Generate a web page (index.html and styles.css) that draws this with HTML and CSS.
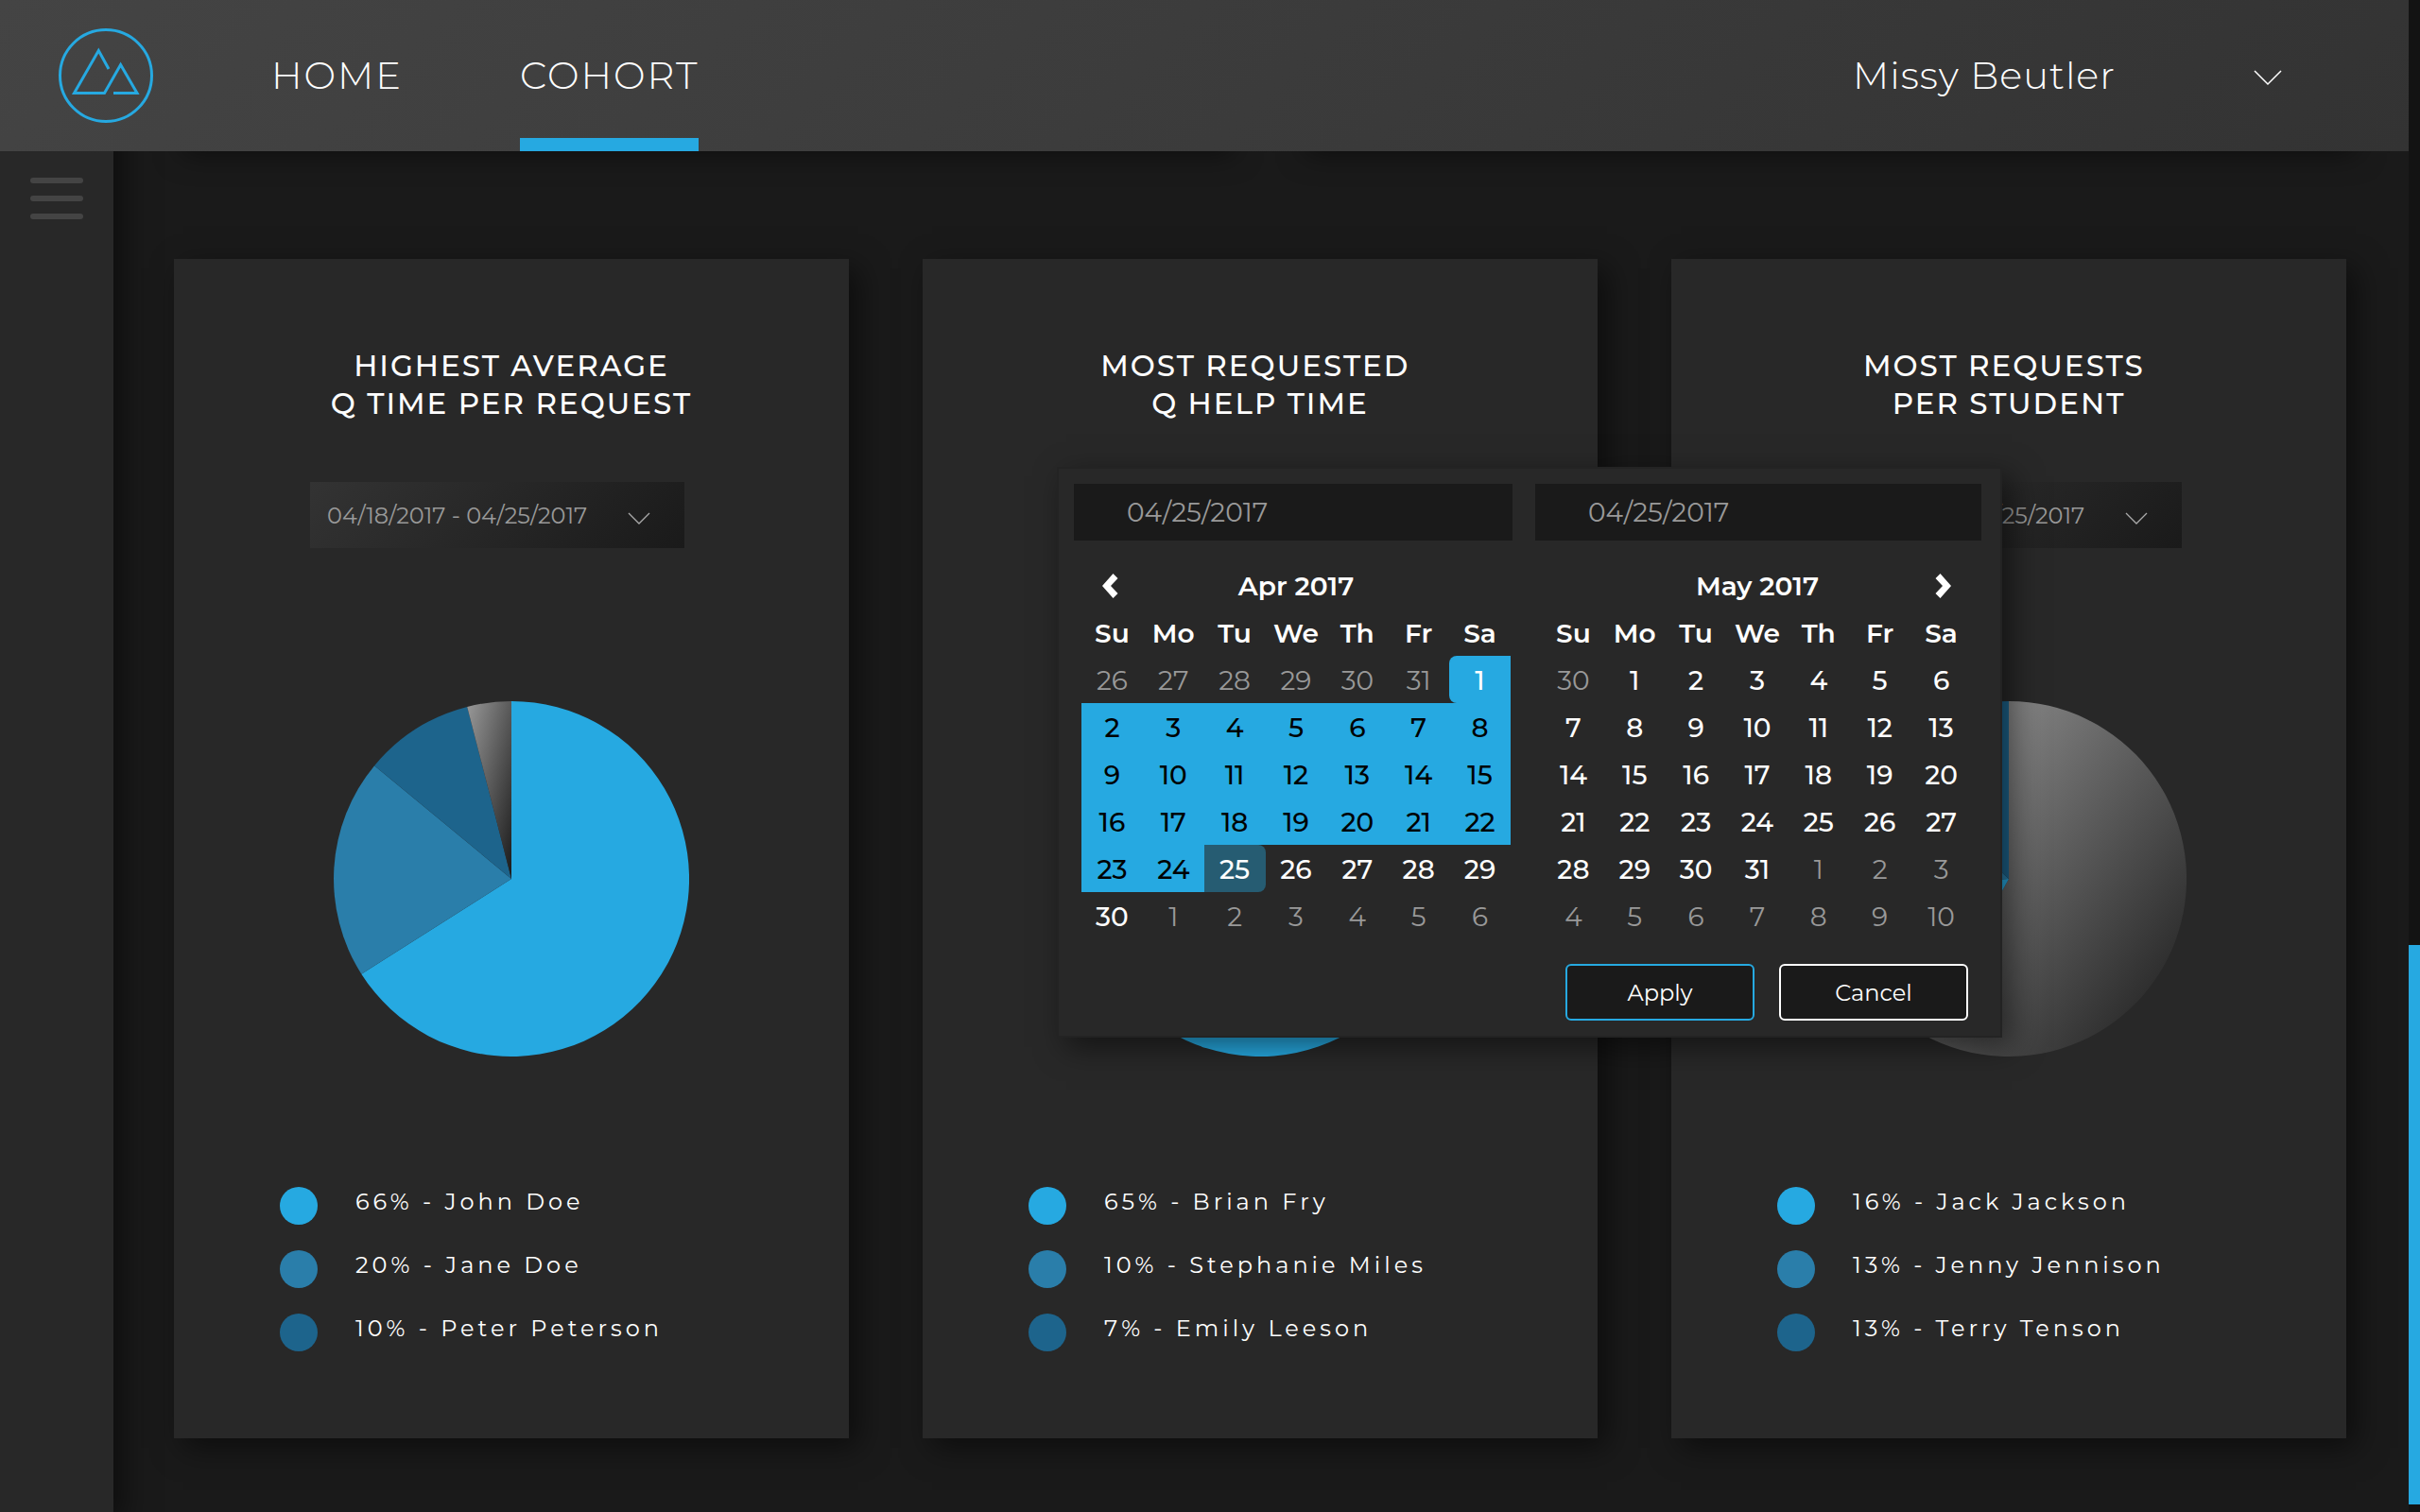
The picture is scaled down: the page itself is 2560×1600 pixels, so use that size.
FILE: index.html
```html
<!DOCTYPE html>
<html lang="en">
<head>
<meta charset="utf-8">
<meta name="viewport" content="width=device-width, initial-scale=1">
<title>Cohort</title>
<link rel="stylesheet" href="styles.css">
</head>
<body>
<header class="topbar">
  <a class="logo" href="#" aria-label="Start page">
    <svg viewBox="0 0 100 100" fill="none" stroke="#26a9e1" stroke-width="3">
      <circle cx="50" cy="50" r="48.5"/>
      <path d="M53 43 42.300 23.500 16.500 68.500H48.500L65.600 38.500 83 68.500H58"/>
    </svg>
  </a>
  <nav class="nav">
    <a class="nav-link" href="#">HOME</a>
    <a class="nav-link active" href="#" aria-current="page">COHORT</a>
  </nav>
  <button class="user" type="button">Missy Beutler
    <svg class="user-chevron" viewBox="0 0 30 17" fill="none" stroke="#fff" stroke-width="1.500"><path d="M1 1 15 15 29 1"/></svg>
  </button>
</header>

<div class="layout">
  <aside class="sidebar">
    <button class="menu" type="button" aria-label="Menu"><span></span><span></span><span></span></button>
  </aside>
  <main class="content">
    <div class="row row-top"><div class="card"></div><div class="card"></div></div>
    <div class="row">
      <section class="card stat">
        <h2 class="title">HIGHEST AVERAGE<br>Q TIME PER REQUEST</h2>
        <button class="range" type="button">04/18/2017 - 04/25/2017
          <svg viewBox="0 0 24 14" fill="none" stroke="#aaa" stroke-width="1.300"><path d="M1 1 12 12 23 1"/></svg>
        </button>
        <svg class="pie" viewBox="-188 -188 376 376" role="img" aria-label="Share of requests">
          <defs>
            <linearGradient id="rest" x1="0" y1="0" x2="1" y2="1"><stop offset="0" stop-color="#999"/><stop offset="1" stop-color="#1a1a1a"/></linearGradient>
          </defs>
          <path fill="#26a9e1" d="M0 0V-188A188 188 0 1 1 -158.700 100.700Z"/>
          <path fill="#2a7eaa" d="M0 0-158.700 100.700A188 188 0 0 1 -144.900 -119.800Z"/>
          <path fill="#1d648c" d="M0 0-144.900 -119.800A188 188 0 0 1 -46.800 -182.100Z"/>
          <path fill="url(#rest)" d="M0 0-46.800 -182.100A188 188 0 0 1 0 -188Z"/>
        </svg>
        <ul class="legend">
          <li><i class="dot dot-1"></i>66% - John Doe</li>
          <li><i class="dot dot-2"></i>20% - Jane Doe</li>
          <li><i class="dot dot-3"></i>10% - Peter Peterson</li>
        </ul>
      </section>

      <section class="card stat">
        <h2 class="title">MOST REQUESTED&nbsp;<br>Q HELP TIME</h2>
        <button class="range" type="button">04/18/2017 - 04/25/2017
          <svg viewBox="0 0 24 14" fill="none" stroke="#aaa" stroke-width="1.300"><path d="M1 1 12 12 23 1"/></svg>
        </button>
        <svg class="pie" viewBox="-188 -188 376 376" role="img" aria-label="Share of help time">
          <path fill="url(#rest)" d="M0 0-182.100 -46.800A188 188 0 0 1 0 -188Z"/>
          <path fill="#26a9e1" d="M0 0V-188A188 188 0 1 1 -152.100 110.500Z"/>
          <path fill="#2a7eaa" d="M0 0-152.100 110.500A188 188 0 0 1 -188 0Z"/>
          <path fill="#1d648c" d="M0 0-188 0A188 188 0 0 1 -182.100 -46.800Z"/>
        </svg>
        <ul class="legend">
          <li><i class="dot dot-1"></i>65% - Brian Fry</li>
          <li><i class="dot dot-2"></i>10% - Stephanie Miles</li>
          <li><i class="dot dot-3"></i>7% - Emily Leeson</li>
        </ul>
        <div class="picker" role="dialog" aria-label="Choose a date range">
          <div class="month">
            <input class="date" type="text" aria-label="Start date" value="04/25/2017">
            <table class="days">
              <thead>
                <tr><th><button class="step" type="button" aria-label="Previous month"><svg viewBox="0 0 18 26"><path fill="#fff" d="M10.500 0 15.500 5 8 13 15.500 21 10.500 26 -1 13Z"/></svg></button></th><th colspan="5">Apr 2017</th><th></th></tr>
                <tr><th>Su</th><th>Mo</th><th>Tu</th><th>We</th><th>Th</th><th>Fr</th><th>Sa</th></tr>
              </thead>
              <tbody>
                <tr><td class="off">26</td><td class="off">27</td><td class="off">28</td><td class="off">29</td><td class="off">30</td><td class="off">31</td><td class="in start">1</td></tr>
                <tr class="full"><td>2</td><td>3</td><td>4</td><td>5</td><td>6</td><td>7</td><td>8</td></tr>
                <tr class="full"><td>9</td><td>10</td><td>11</td><td>12</td><td>13</td><td>14</td><td>15</td></tr>
                <tr class="full"><td>16</td><td>17</td><td>18</td><td>19</td><td>20</td><td>21</td><td>22</td></tr>
                <tr><td class="in">23</td><td class="in">24</td><td class="end">25</td><td>26</td><td>27</td><td>28</td><td>29</td></tr>
                <tr><td>30</td><td class="off">1</td><td class="off">2</td><td class="off">3</td><td class="off">4</td><td class="off">5</td><td class="off">6</td></tr>
              </tbody>
            </table>
          </div>
          <div class="month">
            <input class="date" type="text" aria-label="End date" value="04/25/2017">
            <table class="days">
              <thead>
                <tr><th></th><th colspan="5">May 2017</th><th><button class="step" type="button" aria-label="Next month"><svg viewBox="0 0 18 26"><path fill="#fff" d="M7.500 0 2.500 5 10 13 2.500 21 7.500 26 19 13Z"/></svg></button></th></tr>
                <tr><th>Su</th><th>Mo</th><th>Tu</th><th>We</th><th>Th</th><th>Fr</th><th>Sa</th></tr>
              </thead>
              <tbody>
                <tr><td class="off">30</td><td>1</td><td>2</td><td>3</td><td>4</td><td>5</td><td>6</td></tr>
                <tr><td>7</td><td>8</td><td>9</td><td>10</td><td>11</td><td>12</td><td>13</td></tr>
                <tr><td>14</td><td>15</td><td>16</td><td>17</td><td>18</td><td>19</td><td>20</td></tr>
                <tr><td>21</td><td>22</td><td>23</td><td>24</td><td>25</td><td>26</td><td>27</td></tr>
                <tr><td>28</td><td>29</td><td>30</td><td>31</td><td class="off">1</td><td class="off">2</td><td class="off">3</td></tr>
                <tr><td class="off">4</td><td class="off">5</td><td class="off">6</td><td class="off">7</td><td class="off">8</td><td class="off">9</td><td class="off">10</td></tr>
              </tbody>
            </table>
          </div>
          <div class="actions">
            <button class="btn btn-apply" type="button">Apply</button>
            <button class="btn" type="button">Cancel</button>
          </div>
        </div>
      </section>

      <section class="card stat">
        <h2 class="title">MOST REQUESTS&nbsp;<br>PER STUDENT</h2>
        <button class="range" type="button">04/18/2017 - 04/25/2017
          <svg viewBox="0 0 24 14" fill="none" stroke="#aaa" stroke-width="1.300"><path d="M1 1 12 12 23 1"/></svg>
        </button>
        <svg class="pie" viewBox="-188 -188 376 376" role="img" aria-label="Share of requests per student">
          <path fill="url(#rest)" d="M0 0V-188A188 188 0 1 1 -90.600 164.700Z"/>
          <path fill="#26a9e1" d="M0 0-90.600 164.700A188 188 0 0 1 -187.600 11.800Z"/>
          <path fill="#2a7eaa" d="M0 0-187.600 11.800A188 188 0 0 1 -137 -128.700Z"/>
          <path fill="#1d648c" d="M0 0-137 -128.700A188 188 0 0 1 0 -188Z"/>
        </svg>
        <ul class="legend">
          <li><i class="dot dot-1"></i>16% - Jack Jackson</li>
          <li><i class="dot dot-2"></i>13% - Jenny Jennison</li>
          <li><i class="dot dot-3"></i>13% - Terry Tenson</li>
        </ul>
      </section>
    </div>
  </main>
</div>
<div class="scrollbar"><div class="thumb"></div></div>
</body>
</html>
```
FILE: styles.css
```css
*,
*::before,
*::after {
  box-sizing: border-box;
}

body {
  margin: 0;
  padding-right: 12px;
  background: #1a1a1a;
  color: #fff;
  font-family: Montserrat, Inter, sans-serif;
  font-size: 24px;
}

button,
input {
  font: inherit;
  color: inherit;
  border: 0;
  margin: 0;
  padding: 0;
  background: none;
}

/* Top bar */
.topbar {
  position: fixed;
  z-index: 3;
  top: 0;
  left: 0;
  right: 12px;
  height: 160px;
  padding: 0 134px 0 62px;
  display: flex;
  align-items: center;
  background: linear-gradient(135deg, #444, #333);
  font-size: 40px;
  font-weight: 300;
  letter-spacing: 2px;
}

.logo svg {
  display: block;
  width: 100px;
  height: 100px;
}

.nav {
  align-self: stretch;
  display: flex;
  gap: 124px;
  margin-left: 125px;
}

.nav-link {
  display: flex;
  align-items: center;
  color: #fff;
  text-decoration: none;
  border-bottom: 14px solid transparent;
  padding-top: 12px;
}

.nav-link.active {
  border-bottom-color: #26a9e1;
}

.user {
  display: flex;
  align-items: center;
  gap: 146px;
  margin-left: auto;
  padding-bottom: 2px;
  letter-spacing: 1px;
}

.user-chevron {
  width: 30px;
  height: 17px;
  margin-top: 6px;
}

/* Page frame */
.layout {
  display: grid;
  grid-template-columns: 120px 1fr;
  min-height: 100vh;
}

.sidebar {
  padding: 188px 32px 0;
  background: #282828;
  box-shadow: 10px 10px 30px rgba(0, 0, 0, .5);
}

.menu {
  width: 100%;
  display: grid;
  gap: 13px;
}

.menu span {
  height: 6px;
  border-radius: 3px;
  background: #444;
}

.content {
  padding: 72px 66px 78px 64px;
}

.row {
  display: grid;
  grid-auto-flow: column;
  grid-auto-columns: 1fr;
  gap: 78px;
}

.row-top {
  grid-auto-rows: 80px;
  margin-bottom: 122px;
}

.card {
  background: #282828;
  box-shadow: 10px 10px 30px rgba(0, 0, 0, .5);
}

/* Statistic cards */
.stat {
  position: relative;
  display: flex;
  flex-direction: column;
  align-items: center;
  padding: 93px 0 92px;
}

.title {
  margin: 0 0 63px;
  font-size: 31px;
  line-height: 40px;
  font-weight: 500;
  letter-spacing: 2px;
  text-align: center;
}

.range {
  align-self: flex-start;
  width: 396px;
  height: 70px;
  margin-left: 144px;
  padding: 0 36px 0 18px;
  display: flex;
  align-items: center;
  justify-content: space-between;
  background: linear-gradient(135deg, #333, #1a1a1a);
  color: #999;
}

.range svg {
  width: 24px;
  height: 14px;
  margin-top: 8px;
}

.pie {
  width: 376px;
  height: 376px;
  margin-top: 162px;
}

.legend {
  align-self: stretch;
  display: grid;
  gap: 27px;
  margin: 138px 0 0;
  padding: 0 0 0 112px;
  list-style: none;
  letter-spacing: 4px;
}

.legend li {
  display: flex;
  gap: 40px;
  line-height: 32px;
}

.dot {
  width: 40px;
  height: 40px;
  border-radius: 50%;
}

.dot-1 {
  background: #26a9e1;
}

.dot-2 {
  background: #2a7eaa;
}

.dot-3 {
  background: #1d648c;
}

/* Date range picker */
.picker {
  position: absolute;
  z-index: 2;
  top: 220px;
  left: 142px;
  width: 1000px;
  padding: 16px 20px 16px 16px;
  display: grid;
  grid-template-columns: 464px 472px;
  gap: 26px 24px;
  background: #282828;
  border: 2px solid #232323;
  box-shadow: 10px 10px 30px rgba(0, 0, 0, .5);
  font-size: 28px;
}

.date {
  width: 100%;
  height: 60px;
  padding: 0 56px;
  background: #1a1a1a;
  color: #999;
}

.days {
  width: 454px;
  margin: 22px 0 0 8px;
  table-layout: fixed;
  border-collapse: collapse;
  text-align: center;
  font-weight: 500;
}

.days th,
.days td {
  height: 50px;
  padding: 2px 0 0;
}

.days th {
  font-weight: 600;
}

.step {
  display: block;
  margin: 0 auto;
}

.step svg {
  display: block;
  width: 18px;
  height: 26px;
  overflow: visible;
}

.off {
  color: #999;
  font-weight: 400;
}

.in,
.full {
  background: #26a9e1;
  color: #000;
}

.start {
  color: #fff;
  border-radius: 8px 0 0 8px;
}

.end {
  background: #265c72;
  border-radius: 0 8px 8px 0;
}

.actions {
  grid-column: 2;
  display: flex;
  gap: 26px;
  padding-left: 32px;
}

.btn {
  width: 200px;
  height: 60px;
  border: 2px solid #fff;
  border-radius: 6px;
  background: #1a1a1a;
  font-size: 24px;
}

.btn-apply {
  border-color: #26a9e1;
}

/* Scroll indicator */
.scrollbar {
  position: fixed;
  top: 0;
  right: 0;
  bottom: 0;
  width: 12px;
  display: flex;
  flex-direction: column;
  justify-content: flex-end;
  background: #131313;
}

.thumb {
  height: 37%;
  margin-bottom: 8px;
  background: #26a9e1;
}
```
